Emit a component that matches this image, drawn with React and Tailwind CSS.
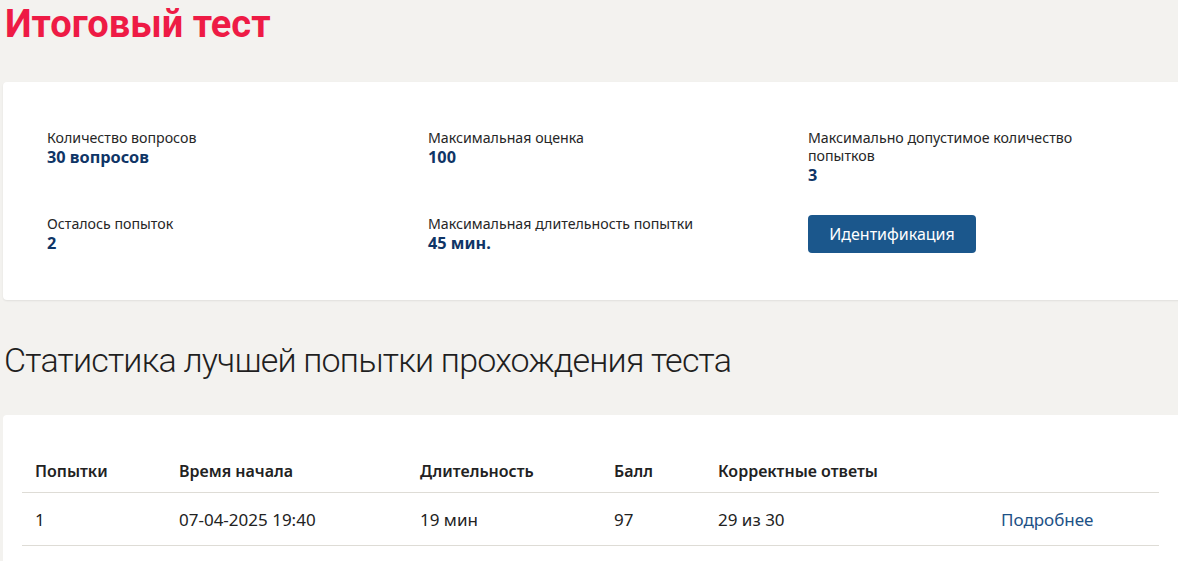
import React from "react";

const body = { fontFamily: '"Noto Sans", "Open Sans", sans-serif' };

function Info({ label, value }) {
  return (
    <div>
      <div className="text-[14.2px] leading-[18px] text-[#262626]">{label}</div>
      <div className="text-[16.3px] leading-[20px] font-bold text-[#0f3566]">{value}</div>
    </div>
  );
}

export default function App() {
  const cols = "grid grid-cols-[144px_241px_194px_104px_283px_1fr]";
  return (
    <div className="min-h-[561px] bg-[#f3f2ef] overflow-hidden" style={body}>
      <h1
        className="pl-[5px] text-[38px] leading-[48px] font-bold text-[#ee1b45]"
        style={{ fontFamily: 'Roboto, "Noto Sans", sans-serif' }}
      >
        Итоговый тест
      </h1>
      <div className="ml-[3px] mt-[34px] w-[1180px] rounded-[4px] bg-white pl-[44px] pt-[47px] pb-[47px] shadow-[0_1px_2px_rgba(0,0,0,0.08)]">
        <div className="grid grid-cols-[381px_380px_380px] grid-rows-[56px_38px] gap-y-[30px]">
          <Info label="Количество вопросов" value="30 вопросов" />
          <Info label="Максимальная оценка" value="100" />
          <div className="w-[290px]">
            <Info label="Максимально допустимое количество попытков" value="3" />
          </div>
          <Info label="Осталось попыток" value="2" />
          <Info label="Максимальная длительность попытки" value="45 мин." />
          <div>
            <button className="h-[38px] w-[168px] rounded-[4px] bg-[#1b578c] text-[16px] text-white">
              Идентификация
            </button>
          </div>
        </div>
      </div>
      <h2
        className="mt-[38px] pl-[4px] text-[34px] leading-[44px] font-light text-[#1f1f1f] tracking-[-0.8px]"
        style={{ fontFamily: 'Roboto, "Noto Sans", sans-serif' }}
      >
        Статистика лучшей попытки прохождения теста
      </h2>
      <div className="ml-[3px] mt-[33px] w-[1180px] rounded-[4px] bg-white pl-[19px] pt-[35px] pb-[20px]">
        <div className="w-[1137px] text-[#222]">
          <div className={`${cols} h-[43px] items-center border-b border-[#dedcd6] text-[16px] font-semibold`}>
            <div className="pl-[13px]">Попытки</div>
            <div className="pl-[13px]">Время начала</div>
            <div className="pl-[13px]">Длительность</div>
            <div className="pl-[13px]">Балл</div>
            <div className="pl-[13px]">Корректные ответы</div>
            <div></div>
          </div>
          <div className={`${cols} h-[53px] items-center border-b border-[#dedcd6] pt-[2px] text-[17px]`}>
            <div className="pl-[13px]">1</div>
            <div className="pl-[13px]">07-04-2025 19:40</div>
            <div className="pl-[13px]">19 мин</div>
            <div className="pl-[13px]">97</div>
            <div className="pl-[13px]">29 из 30</div>
            <div className="pl-[13px] text-[#1d5186]">Подробнее</div>
          </div>
        </div>
      </div>
    </div>
  );
}
